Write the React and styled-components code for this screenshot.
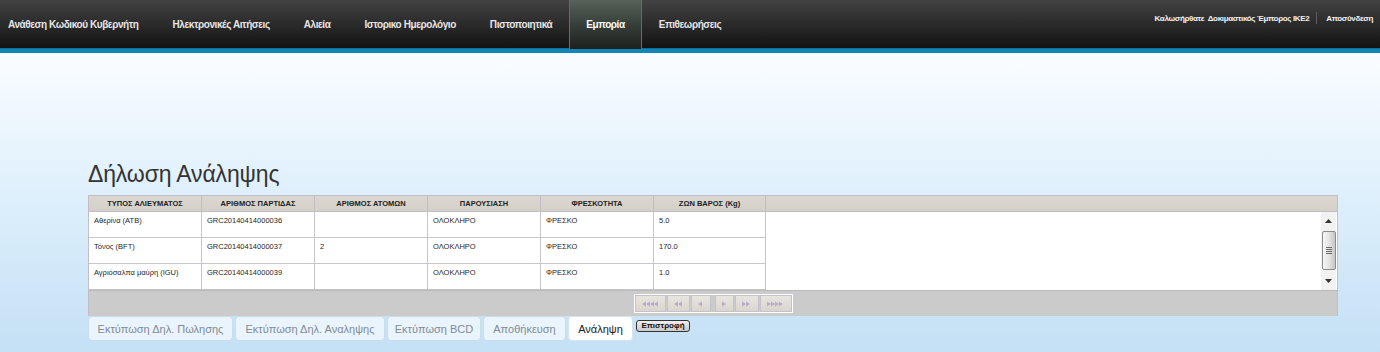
import React from "react";
import styled, { createGlobalStyle, css } from "styled-components";

const Global = createGlobalStyle`
  html, body { margin: 0; padding: 0; }
  body {
    font-family: "Liberation Sans", Arial, sans-serif;
    background: #c5e1f6;
  }
  #root { min-height: 352px; }
`;

const Page = styled.div`
  min-height: 352px;
  display: flex;
  flex-direction: column;
  background: linear-gradient(to bottom, #fbfdff 0px, #fafdff 53px, #dff0fc 190px, #c4e0f5 352px);
`;

const TopBar = styled.header`
  height: 49px;
  display: flex;
  justify-content: space-between;
  background: linear-gradient(to bottom, #424242 0%, #2a2a2a 50%, #121212 100%);
  border-bottom: 4px solid #1286b6;
  box-shadow: inset 0 -1px 0 #0a6f99;
`;

const Nav = styled.nav`
  display: flex;
  height: 49px;
`;

const NavItem = styled.a`
  display: flex;
  align-items: center;
  padding: 0 16px;
  border-left: 1px solid transparent;
  border-right: 1px solid transparent;
  font-size: 10px;
  font-weight: bold;
  color: #e6e6e6;
  white-space: nowrap;
  letter-spacing: -0.42px;
  &:first-child { padding-left: 8px; border-left: 0; }
  ${(p) =>
    p.$active &&
    css`
      color: #ffffff;
      background: linear-gradient(to bottom, #56625a 0%, #3a423c 45%, #1d201e 100%);
      border-left-color: #6a6a6a;
      border-right-color: #6a6a6a;
    `}
`;

const UserArea = styled.div`
  display: flex;
  align-items: center;
  height: 12px;
  margin-top: 12px;
  padding-right: 7px;
  font-size: 8px;
  font-weight: bold;
  letter-spacing: -0.35px;
  color: #f2f2f2;
  white-space: nowrap;
`;

const Separator = styled.span`
  width: 1px;
  height: 12px;
  background: #5e5e5e;
  margin: 0 9px 0 7px;
`;

const Main = styled.main`
  padding: 107px 42px 11px 88px;
  display: flex;
  flex-direction: column;
`;

const Title = styled.h1`
  margin: 0 0 7px 0;
  font-size: 23px;
  line-height: 28px;
  letter-spacing: -0.15px;
  font-weight: normal;
  color: #333;
`;

const Grid = styled.div`
  border: 1px solid #c2bec6;
  border-bottom: 0;
  background: #fff;
`;

const HeadRow = styled.div`
  display: flex;
  height: 15px;
  background: linear-gradient(to bottom, #dcd8d1, #d4d0c8);
  border-bottom: 1px solid #c2bec6;
`;

const HeadCell = styled.div`
  box-sizing: border-box;
  width: ${(p) => p.$w}px;
  flex: ${(p) => (p.$fill ? "1" : "none")};
  border-right: ${(p) => (p.$fill ? "0" : "1px solid #c2bec6")};
  font-size: 7.5px;
  font-weight: bold;
  color: #222;
  text-align: center;
  line-height: 15px;
  white-space: nowrap;
`;

const Body = styled.div`
  display: flex;
  height: 78px;
`;

const Rows = styled.div`
  display: flex;
  flex-direction: column;
`;

const Row = styled.div`
  display: flex;
  height: 26px;
`;

const Cell = styled.div`
  box-sizing: border-box;
  width: ${(p) => p.$w}px;
  border-right: 1px solid #c8c4cc;
  border-bottom: 1px solid #c8c4cc;
  padding: 4px 0 0 5px;
  font-size: 7.5px;
  line-height: 10px;
  color: #262626;
  white-space: nowrap;
`;

const Filler = styled.div`
  flex: 1;
  background: ${(p) => (p.$clear ? "transparent" : "#fff")};
`;

const Scrollbar = styled.div`
  width: 15px;
  display: flex;
  flex-direction: column;
  align-items: center;
  background: #f2f2f2;
  margin-right: 1px;
`;

const ScrollArrow = styled.div`
  height: 18px;
  display: flex;
  align-items: center;
  justify-content: center;
`;

const Thumb = styled.div`
  box-sizing: border-box;
  width: 14px;
  height: 39px;
  margin-top: 1px;
  border: 1px solid #8c8c8c;
  border-radius: 2px;
  background: linear-gradient(to right, #f6f6f6 0%, #e4e4e4 50%, #c6c6c6 100%);
  display: flex;
  align-items: center;
  justify-content: center;
`;

const Pager = styled.div`
  height: 26px;
  box-sizing: border-box;
  background: #cbcbcb;
  border-top: 1px solid #b9b9b9;
  border-left: 1px solid #c2bec6;
  border-right: 1px solid #c2bec6;
  display: flex;
  justify-content: center;
  align-items: flex-start;
  padding-top: 3px;
`;

const PagerGroup = styled.div`
  display: flex;
  gap: 1px;
  border: 1px solid #ffffff;
  background: #cbcbcb;
`;

const PageBtn = styled.span`
  box-sizing: border-box;
  width: ${(p) => p.$w}px;
  height: 17px;
  margin-left: ${(p) => p.$ml || 0}px;
  border: 1px solid #c6c2cc;
  background: linear-gradient(to bottom, #e8e5e0, #d9d5ce);
  display: flex;
  align-items: center;
  justify-content: center;
`;

const Actions = styled.div`
  display: flex;
  align-items: flex-start;
  gap: 2px;
`;

const ActionButton = styled.button`
  box-sizing: border-box;
  width: ${(p) => p.$w}px;
  height: 25px;
  padding: 0;
  text-align: center;
  font-family: "Liberation Sans", Arial, sans-serif;
  font-size: 11px;
  color: ${(p) => (p.$active ? "#222" : "#7f8c97")};
  background: ${(p) => (p.$active ? "#ffffff" : "#eaf4fc")};
  border: 1px solid ${(p) => (p.$active ? "#d6e4ef" : "#c8dcec")};
  border-radius: 4px;
  white-space: nowrap;
`;

const BackButton = styled.button`
  box-sizing: border-box;
  width: 54px;
  height: 12px;
  margin: 4px 0 0 1px;
  padding: 0;
  text-align: center;
  font-family: "Liberation Sans", Arial, sans-serif;
  font-size: 8px;
  font-weight: bold;
  line-height: 10px;
  color: #111;
  background: linear-gradient(to bottom, #f0f0f0, #c9c9c9);
  border: 1px solid #333;
  border-radius: 3px;
`;

function Chevrons({ n, dir }) {
  const w = n * 4 + 1;
  const tris = [];
  for (let i = 0; i < n; i++) {
    const x = i * 4;
    tris.push(
      dir === "left"
        ? `M${x + 4} 0.5 L${x} 3 L${x + 4} 5.5 Z`
        : `M${x} 0.5 L${x + 4} 3 L${x} 5.5 Z`
    );
  }
  return (
    <svg width={w} height="6" viewBox={`0 0 ${w} 6`}>
      <path d={tris.join(" ")} fill="#b6aec8" />
    </svg>
  );
}

const cols = [113, 113, 113, 113, 113, 112];
const headers = [
  "ΤΥΠΟΣ ΑΛΙΕΥΜΑΤΟΣ",
  "ΑΡΙΘΜΟΣ ΠΑΡΤΙΔΑΣ",
  "ΑΡΙΘΜΟΣ ΑΤΟΜΩΝ",
  "ΠΑΡΟΥΣΙΑΣΗ",
  "ΦΡΕΣΚΟΤΗΤΑ",
  "ΖΩΝ ΒΑΡΟΣ (Kg)",
];
const data = [
  ["Αθερίνα (ATB)", "GRC20140414000036", "", "ΟΛΟΚΛΗΡΟ", "ΦΡΕΣΚΟ", "5.0"],
  ["Τόνος (BFT)", "GRC20140414000037", "2", "ΟΛΟΚΛΗΡΟ", "ΦΡΕΣΚΟ", "170.0"],
  ["Αγριόσαλπα μαύρη (IGU)", "GRC20140414000039", "", "ΟΛΟΚΛΗΡΟ", "ΦΡΕΣΚΟ", "1.0"],
];

const navItems = [
  "Ανάθεση Κωδικού Κυβερνήτη",
  "Ηλεκτρονικές Αιτήσεις",
  "Αλιεία",
  "Ιστορικο Ημερολόγιο",
  "Πιστοποιητικά",
  "Εμπορία",
  "Επιθεωρήσεις",
];

const pageBtns = [
  { n: 4, dir: "left", w: 31 },
  { n: 2, dir: "left", w: 23 },
  { n: 1, dir: "left", w: 20 },
  { n: 1, dir: "right", w: 19, ml: 3 },
  { n: 2, dir: "right", w: 24 },
  { n: 4, dir: "right", w: 32 },
];

const actions = [
  { t: "Εκτύπωση Δηλ. Πωλησης", w: 145 },
  { t: "Εκτύπωση Δηλ. Αναληψης", w: 150 },
  { t: "Εκτύπωση BCD", w: 94 },
  { t: "Αποθήκευση", w: 83 },
  { t: "Ανάληψη", w: 65, active: true },
];

export default function App() {
  return (
    <>
      <Global />
      <Page>
        <TopBar>
          <Nav>
            {navItems.map((n) => (
              <NavItem key={n} $active={n === "Εμπορία"}>
                {n}
              </NavItem>
            ))}
          </Nav>
          <UserArea>
            <span>Καλωσήρθατε&nbsp; Δοκιμαστικός Έμπορος IKE2</span>
            <Separator />
            <span>Αποσύνδεση</span>
          </UserArea>
        </TopBar>
        <Main>
          <Title>Δήλωση Ανάληψης</Title>
          <Grid>
            <HeadRow>
              {headers.map((h, i) => (
                <HeadCell key={h} $w={cols[i]}>
                  {h}
                </HeadCell>
              ))}
              <HeadCell $fill />
            </HeadRow>
            <Body>
              <Rows>
                {data.map((r, ri) => (
                  <Row key={ri}>
                    {r.map((c, ci) => (
                      <Cell key={ci} $w={cols[ci]}>
                        {c}
                      </Cell>
                    ))}
                  </Row>
                ))}
              </Rows>
              <Filler />
              <Scrollbar>
                <ScrollArrow>
                  <svg width="7" height="4" viewBox="0 0 7 4">
                    <path d="M3.5 0 L7 4 L0 4 Z" fill="#333" />
                  </svg>
                </ScrollArrow>
                <Thumb>
                  <svg width="6" height="7" viewBox="0 0 6 7">
                    <path d="M0 0.5 H6 M0 2.5 H6 M0 4.5 H6 M0 6.5 H6" stroke="#6a6a6a" strokeWidth="1" />
                  </svg>
                </Thumb>
                <Filler $clear />
                <ScrollArrow>
                  <svg width="7" height="4" viewBox="0 0 7 4">
                    <path d="M0 0 L7 0 L3.5 4 Z" fill="#333" />
                  </svg>
                </ScrollArrow>
              </Scrollbar>
            </Body>
          </Grid>
          <Pager>
            <PagerGroup>
              {pageBtns.map((b, i) => (
                <PageBtn key={i} $w={b.w} $ml={b.ml}>
                  <Chevrons n={b.n} dir={b.dir} />
                </PageBtn>
              ))}
            </PagerGroup>
          </Pager>
          <Actions>
            {actions.map((a) => (
              <ActionButton key={a.t} $w={a.w} $active={a.active}>
                {a.t}
              </ActionButton>
            ))}
            <BackButton>Επιστροφή</BackButton>
          </Actions>
        </Main>
      </Page>
    </>
  );
}
